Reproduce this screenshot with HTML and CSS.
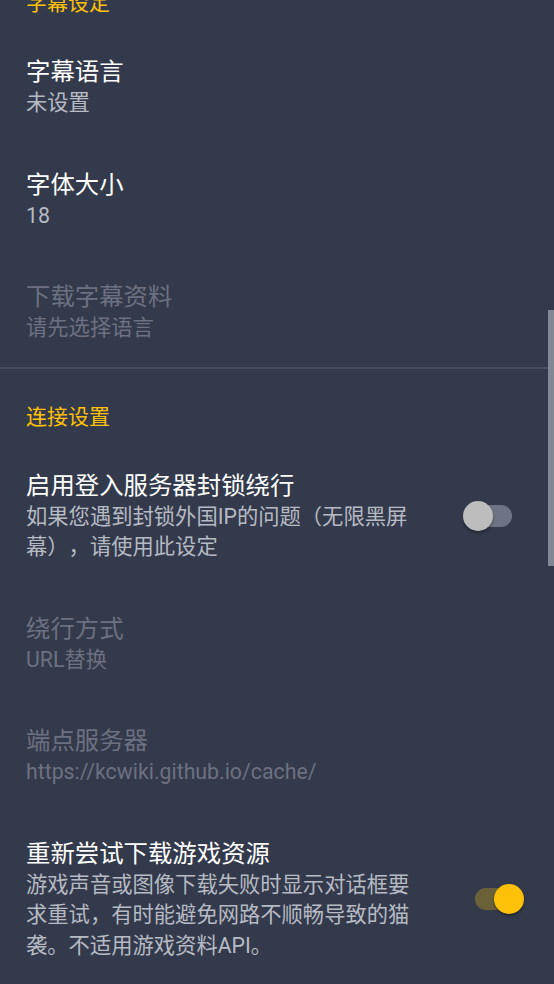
FILE: index.html
```html
<!DOCTYPE html>
<html lang="zh-CN">
<head>
<meta charset="utf-8">
<title>设置</title>
<link rel="stylesheet" href="styles.css">
</head>
<body>
<div class="list">
  <div class="category first">字幕设定</div>

  <div class="pref">
    <div class="text">
      <div class="title">字幕语言</div>
      <div class="summary">未设置</div>
    </div>
  </div>

  <div class="pref">
    <div class="text">
      <div class="title">字体大小</div>
      <div class="summary">18</div>
    </div>
  </div>

  <div class="pref disabled">
    <div class="text">
      <div class="title">下载字幕资料</div>
      <div class="summary">请先选择语言</div>
    </div>
  </div>

  <div class="divider"></div>

  <div class="category second">连接设置</div>

  <div class="pref">
    <div class="text narrow">
      <div class="title">启用登入服务器封锁绕行</div>
      <div class="summary">如果您遇到封锁外国IP的问题（无限黑屏幕），请使用此设定</div>
    </div>
    <div class="switch off"><span class="track"></span><span class="thumb"></span></div>
  </div>

  <div class="pref disabled">
    <div class="text">
      <div class="title">绕行方式</div>
      <div class="summary">URL替换</div>
    </div>
  </div>

  <div class="pref disabled">
    <div class="text">
      <div class="title">端点服务器</div>
      <div class="summary">https://kcwiki.github.io/cache/</div>
    </div>
  </div>

  <div class="pref">
    <div class="text narrow">
      <div class="title">重新尝试下载游戏资源</div>
      <div class="summary">游戏声音或图像下载失败时显示对话框要求重试，有时能避免网路不顺畅导致的猫袭。不适用游戏资料API。</div>
    </div>
    <div class="switch on"><span class="track"></span><span class="thumb"></span></div>
  </div>
</div>
<div class="scrollbar"></div>
</body>
</html>
```

FILE: styles.css
```css
html, body {
  margin: 0;
  padding: 0;
  height: 100%;
}

body {
  background: #333a4b;
  overflow: hidden;
  font-family: "Roboto", "Noto Sans CJK SC", sans-serif;
  text-spacing-trim: space-all;
  position: relative;
}

.list {
  margin-top: -11px;
}

.category {
  padding: 0 26px 14px;
  font-size: 21px;
  line-height: 28px;
  color: #ffc107;
}

.category.second {
  padding-top: 34px;
}

.pref {
  display: flex;
  align-items: center;
  padding: 25px 30px 25px 26px;
}

.text {
  flex: 1;
  min-width: 0;
}

.text.narrow {
  flex: 0 0 396px;
  margin-right: 41px;
}

.title {
  font-size: 24.4px;
  line-height: 32px;
  color: #ffffff;
}

.summary {
  font-size: 21.3px;
  line-height: 30.5px;
  color: #b6bac3;
}

.disabled .title,
.disabled .summary {
  color: #6c7181;
}

.divider {
  height: 2px;
  background: #464d5d;
  margin-top: -2px;
}

.switch {
  width: 61px;
  height: 30px;
  display: flex;
  align-items: center;
  position: relative;
}

.switch .track {
  margin-left: 12px;
  width: 37px;
  height: 22px;
  border-radius: 11px;
  background: #6e7483;
}

.switch .thumb {
  position: absolute;
  top: 0;
  width: 30px;
  height: 30px;
  border-radius: 50%;
  background: #bdbdbd;
  box-shadow: 0 2px 3px rgba(0, 0, 0, 0.35);
}

.switch.off .thumb {
  left: 0;
}

.switch.on .track {
  background: #6b6139;
}

.switch.on .thumb {
  left: 31px;
  background: #ffc107;
}

.scrollbar {
  position: absolute;
  right: 0;
  top: 310px;
  width: 6px;
  height: 256px;
  background: #838895;
}
```
